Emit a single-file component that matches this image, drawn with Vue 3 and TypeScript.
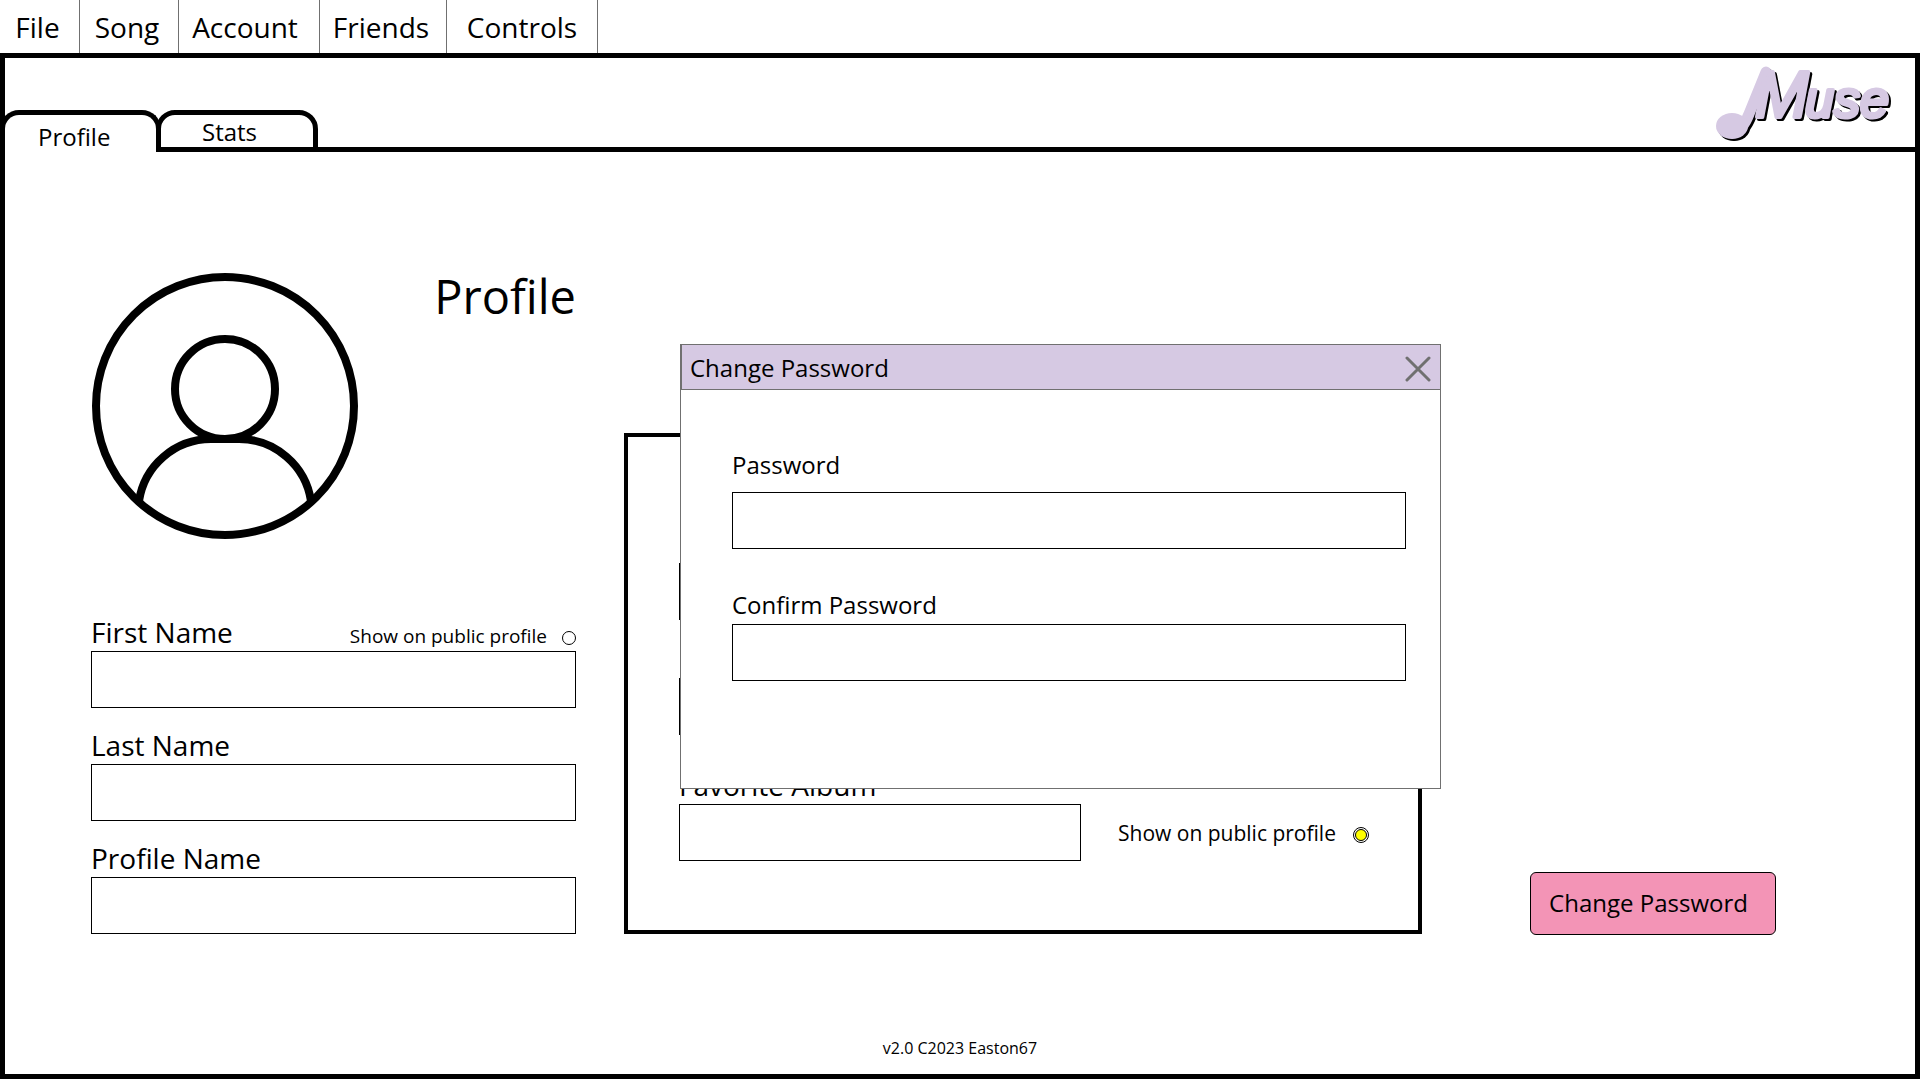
<script setup lang="ts">
import { ref } from 'vue'

const menus = ['File', 'Song', 'Account', 'Friends', 'Controls']
const names = ['First Name', 'Last Name', 'Profile Name']
const nameValues = ref<string[]>(['', '', ''])
const favorites = ref<string[]>(['', '', ''])
const password = ref('')
const confirmation = ref('')
const namePublic = ref('hidden')
const albumPublic = ref('shown')
const dialogOpen = ref(true)
</script>

<template>
  <div class="app">
    <nav class="menu">
      <button v-for="item in menus" :key="item" type="button" class="menu-item" :class="item.toLowerCase()">{{ item }}</button>
    </nav>

    <div class="frame">
      <header class="top">
        <button type="button" class="tab active">Profile</button>
        <button type="button" class="tab stats">Stats</button>
        <div class="brand">
          <svg class="logo" viewBox="0 0 186 84" width="186" height="84" role="img" aria-label="Muse">
            <path class="stem" d="M56 12 L39 54 Q33 70 22 73" />
            <ellipse class="note" cx="22" cy="66" rx="16" ry="13" />
            <text class="word big" x="45" y="57">M</text>
            <text class="word small" x="95" y="57">use</text>
          </svg>
        </div>
      </header>

      <main class="content">
        <section class="person">
          <div class="intro">
            <svg class="avatar" viewBox="0 0 266 266" width="266" height="266" aria-hidden="true">
              <circle cx="133" cy="133" r="129" />
              <circle cx="133" cy="116" r="50" />
              <path d="M47 228 A73 73 0 0 1 119 166 H147 A73 73 0 0 1 219 228" />
            </svg>
            <h1>Profile</h1>
          </div>
          <div class="fields">
            <div v-for="(name, i) in names" :key="name" class="field">
              <div class="field-head">
                <label :for="'name-' + i">{{ name }}</label>
                <label v-if="i === 0" class="share">
                  Show on public profile
                  <input v-model="namePublic" type="radio" name="name-public" value="shown" />
                </label>
              </div>
              <input :id="'name-' + i" v-model="nameValues[i]" class="box" type="text" />
            </div>
          </div>
        </section>

        <div class="middle">
          <section class="panel">
            <input v-model="favorites[0]" class="box" type="text" aria-label="Favorite 1" />
            <input v-model="favorites[1]" class="box" type="text" aria-label="Favorite 2" />
            <div class="album">
              <label class="album-label" for="album">Favorite Album</label>
              <input id="album" v-model="favorites[2]" class="box" type="text" />
              <label class="share wide">
                Show on public profile
                <input v-model="albumPublic" type="radio" name="album-public" value="shown" />
              </label>
            </div>
          </section>

          <section v-if="dialogOpen" class="dialog" role="dialog" aria-labelledby="dialog-title">
            <header class="dialog-head">
              <h2 id="dialog-title">Change Password</h2>
              <button type="button" class="close" aria-label="Close" @click="dialogOpen = false">
                <svg viewBox="0 0 26 26" width="26" height="26"><path d="M2 2 L24 24 M24 2 L2 24" /></svg>
              </button>
            </header>
            <form class="dialog-body" @submit.prevent>
              <label for="password">Password</label>
              <input id="password" v-model="password" class="box" type="password" />
              <label class="second" for="confirm">Confirm Password</label>
              <input id="confirm" v-model="confirmation" class="box" type="password" />
            </form>
          </section>
        </div>

        <button type="button" class="change" @click="dialogOpen = true">Change Password</button>
      </main>

      <footer>v2.0 C2023 Easton67</footer>
    </div>
  </div>
</template>

<style>
body {
  margin: 0;
  background: #fff;
}
</style>

<style scoped>
.app {
  box-sizing: border-box;
  display: flex;
  flex-direction: column;
  min-height: 100vh;
  padding-bottom: 1px;
  color: #000;
  font-family: "Open Sans", "Noto Sans", sans-serif;
  font-weight: 400;
}

.app * {
  box-sizing: border-box;
}

button,
input {
  padding: 0;
  color: inherit;
  font-family: inherit;
  font-weight: inherit;
}

.menu {
  display: flex;
  height: 53px;
}

.menu-item {
  padding: 0;
  border: 0;
  border-right: 1px solid #707070;
  background: none;
  font-size: 28px;
  line-height: 40px;
}

.file {
  width: 80px;
  padding-right: 4px;
}

.song {
  width: 99px;
  padding-right: 4px;
}

.account {
  width: 141px;
  padding-right: 8px;
}

.friends {
  width: 127px;
  padding-right: 4px;
}

.controls {
  width: 151px;
}

.frame {
  display: flex;
  flex: 1;
  flex-direction: column;
  border: 5px solid #000;
}

.top {
  display: flex;
  align-items: flex-end;
  height: 94px;
}

.tab {
  display: flex;
  align-items: flex-end;
  width: 162px;
  height: 42px;
  margin-left: -5px;
  border: 5px solid #000;
  border-radius: 19px 19px 0 0;
  background: #fff;
  font-size: 24px;
  line-height: 30px;
}

.active {
  width: 161px;
  padding-left: 33px;
  border-bottom: 0;
}

.stats {
  padding-left: 41px;
}

.brand {
  display: flex;
  flex: 1;
  align-items: flex-start;
  justify-content: flex-end;
  align-self: stretch;
  padding: 2px 19px 0 0;
  border-bottom: 5px solid #000;
}

.logo {
  overflow: visible;
  fill: #d6c9e3;
  stroke: #d6c9e3;
  filter: drop-shadow(2px 2px 0 #000);
}

.stem {
  fill: none;
  stroke-linecap: round;
  stroke-width: 11px;
}

.note {
  stroke: none;
}

.word {
  font-family: "Liberation Sans Narrow", "Liberation Sans", sans-serif;
  font-style: italic;
  font-weight: 400;
  stroke-linejoin: round;
  stroke-width: 4px;
}

.big {
  font-size: 64px;
}

.small {
  font-family: "Liberation Sans", sans-serif;
  font-size: 52px;
}

.content {
  display: grid;
  grid-template-columns:
    minmax(0, 485fr) minmax(0, 48fr) minmax(0, 798fr)
    minmax(0, 108fr) minmax(0, 246fr) minmax(0, 139fr);
  align-items: end;
  padding: 121px 0 0 86px;
}

.person {
  grid-column: 1;
}

.intro {
  display: flex;
  align-items: flex-start;
  justify-content: space-between;
}

.avatar {
  margin-left: 1px;
  fill: none;
  stroke: #000;
  stroke-width: 8px;
}

h1 {
  margin: 0;
  font-size: 47px;
  font-weight: inherit;
  line-height: 46px;
}

.fields {
  display: flex;
  flex-direction: column;
  gap: 18px;
  margin-top: 74px;
}

.field-head {
  display: flex;
  align-items: baseline;
  justify-content: space-between;
  height: 38px;
  font-size: 28px;
  line-height: 38px;
}

.box {
  display: block;
  width: 100%;
  height: 57px;
  padding: 0 12px;
  border: 1px solid #000;
  border-radius: 0;
  background: #fff;
  font-size: 24px;
}

.share {
  display: flex;
  align-items: center;
  gap: 15px;
  font-size: 19px;
  white-space: nowrap;
}

.share input {
  display: grid;
  width: 14px;
  height: 14px;
  margin: 4px 0 0;
  border: 1px solid #000;
  border-radius: 50%;
  appearance: none;
  background: #fff;
  place-content: center;
}

.wide {
  gap: 17px;
  padding-left: 37px;
  font-size: 21px;
}

.wide input {
  width: 16px;
  height: 16px;
}

.share input:checked::before {
  width: 10px;
  height: 10px;
  border: 1px solid #000;
  border-radius: 50%;
  background: #ff0;
  content: "";
}

.middle {
  position: relative;
  grid-column: 3;
}

.panel {
  padding: 126px 50px 69px 51px;
  border: 4px solid #000;
}

.panel .box {
  width: 402px;
}

.panel > .box + .box {
  margin-top: 58px;
}

.album {
  display: grid;
  grid-template-columns: 402px auto;
  justify-content: start;
  margin-top: 31px;
}

.album-label {
  grid-column: 1 / -1;
  height: 38px;
  font-size: 28px;
  line-height: 38px;
}

.dialog {
  position: absolute;
  top: -89px;
  right: -19px;
  left: 56px;
  height: 445px;
  border: 1px solid #707070;
  background: #fff;
}

.dialog-head {
  display: flex;
  align-items: center;
  justify-content: space-between;
  height: 45px;
  padding: 2px 9px 0 8px;
  border-bottom: 1px solid #707070;
  border-left: 1px solid #707070;
  background: #d6c9e3;
}

h2 {
  margin: 0;
  font-size: 24px;
  font-weight: inherit;
  line-height: 32px;
}

.close {
  display: flex;
  margin-top: 2px;
  border: 0;
  background: none;
}

.close path {
  stroke: #707070;
  stroke-linecap: round;
  stroke-width: 3px;
}

.dialog-body {
  display: flex;
  flex-direction: column;
  padding: 59px 34px 0 51px;
  font-size: 24px;
  line-height: 32px;
}

.dialog-body .box {
  margin-top: 11px;
}

.dialog-body .second {
  margin-top: 40px;
}

.dialog-body .second + .box {
  margin-top: 3px;
}

.change {
  grid-column: 5;
  height: 63px;
  margin-bottom: -1px;
  padding: 0 9px 2px 0;
  border: 1px solid #000;
  border-radius: 6px;
  background: #f394b6;
  font-size: 24px;
}

footer {
  margin-top: auto;
  padding-bottom: 14px;
  font-size: 16px;
  line-height: 24px;
  text-align: center;
}
</style>
